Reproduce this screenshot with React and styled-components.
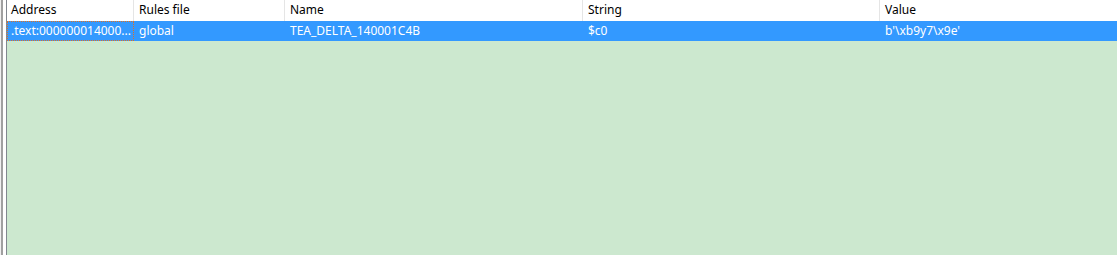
import React from "react";
import styled, { createGlobalStyle } from "styled-components";

const Global = createGlobalStyle`
  html, body { margin: 0; padding: 0; background: #f0f0f0; }
  body { font-family: "Noto Sans", "Open Sans", "Liberation Sans", sans-serif; font-size: 12px; }
`;

const Frame = styled.div`
  width: 1117px;
  height: 255px;
  display: flex;
  background: #f0f0f0;
  overflow: hidden;
`;

const Edge = styled.div`
  width: 1px;
  background: #f0f0f0;
`;

const OuterBorder = styled.div`
  width: 2px;
  background: #a0a0a0;
`;

const Gap = styled.div`
  width: 3px;
  background: #ffffff;
`;

const InnerBorder = styled.div`
  width: 1px;
  background: #828790;
`;

const Table = styled.div`
  flex: 1;
  display: flex;
  flex-direction: column;
  background: #cce8cf;
`;

const cols = "127px 151px 298px 297px 1fr";

const Header = styled.div`
  display: grid;
  grid-template-columns: ${cols};
  height: 21px;
  background: #ffffff;
`;

const HeaderCell = styled.div`
  display: flex;
  align-items: center;
  padding-left: ${(p) => p.$pad || 5}px;
  border-right: ${(p) => (p.$last ? "none" : "1px solid #e5e5e5")};
  color: #000;
  font-size: 12px;
  line-height: 1;
  white-space: nowrap;
  padding-bottom: 2px;
`;

const Row = styled.div`
  display: grid;
  grid-template-columns: ${cols};
  height: 20px;
  background: #3399ff;
  color: #ffffff;
`;

const Cell = styled.div`
  display: flex;
  align-items: center;
  padding-left: 5px;
  font-size: 12px;
  white-space: nowrap;
  overflow: hidden;
  padding-bottom: 1px;
  ${(p) =>
    p.$focus &&
    `
    border: 1px dotted #e07020;
    padding-left: 3px;
  `}
`;

const headers = ["Address", "Rules file", "Name", "String", "Value"];
const row = [".text:000000014000...", "global", "TEA_DELTA_140001C4B", "$c0", "b'\\xb9y7\\x9e'"];

export default function App() {
  return (
    <>
      <Global />
      <Frame>
        <Edge />
        <OuterBorder />
        <Gap />
        <InnerBorder />
        <Table>
          <Header>
            {headers.map((h, i) => (
              <HeaderCell key={h} $pad={i === 0 ? 4 : 5} $last={i === headers.length - 1}>
                {h}
              </HeaderCell>
            ))}
          </Header>
          <Row>
            {row.map((c, i) => (
              <Cell key={i} $focus={i === 0}>
                {c}
              </Cell>
            ))}
          </Row>
        </Table>
      </Frame>
    </>
  );
}
